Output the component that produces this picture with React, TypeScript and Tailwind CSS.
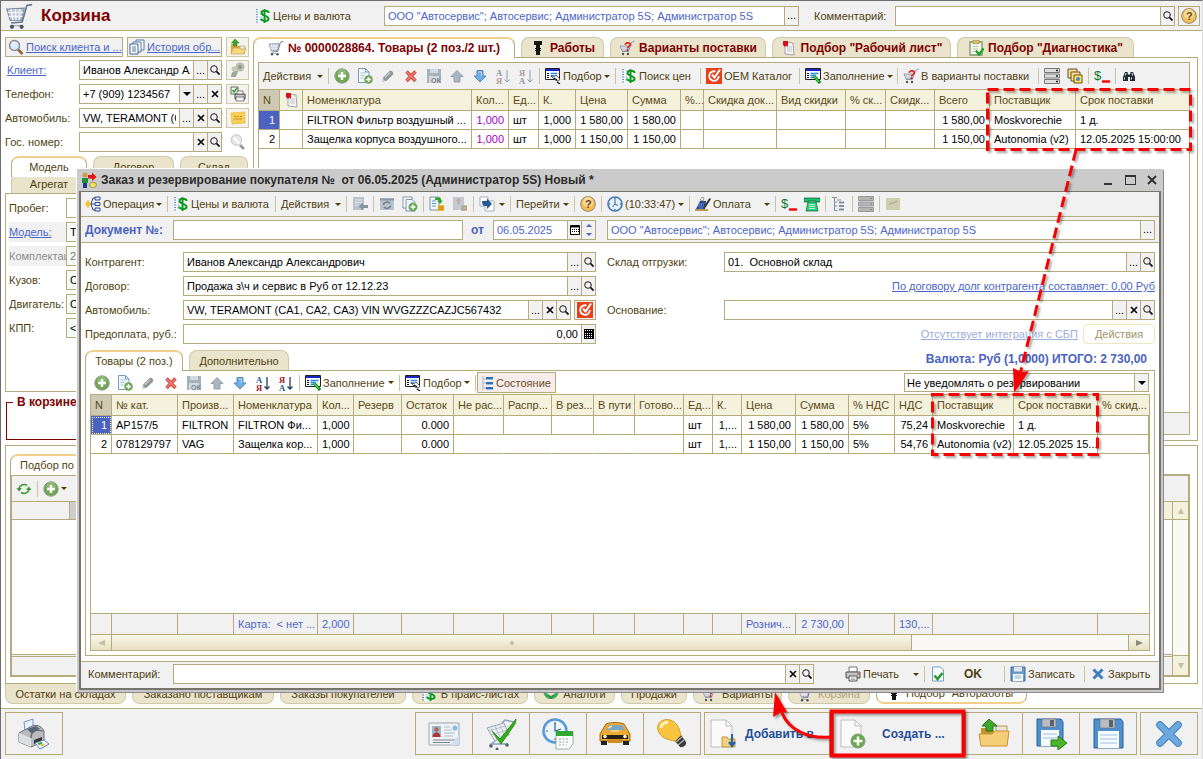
import { useId } from "react";
import type { ReactNode } from "react";

const glyphs: Record<string, ReactNode> = {
  cart: (
    <>
      <path d="M1 4l10-.5-1.500 7H3z" fill="#c3ccd8" stroke="#7d8ba0" strokeWidth=".7" />
      <path d="M3.500 4l1 6.500M6 4l.3 6.500M8.500 4L8 10.500M1.500 6h9M2 8.200h8" stroke="#f4f7fa" strokeWidth=".7" />
      <path d="M15.500 1.500L12.500 2l-2.700 9.500L3.500 12" fill="none" stroke="#66758a" strokeWidth=".9" />
      <path d="M3 13.500h7" stroke="#a9b3c0" strokeWidth=".8" />
      <circle cx="4" cy="14.200" r="1.200" fill="#4a5262" />
      <circle cx="9.500" cy="14.200" r="1.200" fill="#4a5262" />
    </>
  ),
  dollar: (
    <>
      <path d="M3 1h10v14H3z" fill="#f4f8ff" />
      <path d="M2 1v14" stroke="#3b7fc4" strokeDasharray="1 1.500" strokeWidth="1.500" />
      <path d="M4.500 3h3M4.500 6h3M4.500 9h3M4.500 12h3" stroke="#9db7d6" strokeWidth=".8" />
      <path d="M9.500 1v14M13.500 5c0-3-7-3-7 0s7 2.800 7 5.700-7 3-7.500 0" fill="none" stroke="#0d9a1c" strokeWidth="2" />
    </>
  ),
  loupe: (
    <>
      <path d="M9.500 10l5 5" stroke="#9a6240" strokeWidth="2.600" />
      <circle cx="6.500" cy="6.500" r="5" fill="#dcecff" stroke="#8b8f98" strokeWidth="1.500" />
      <path d="M4 5.500c.5-1.500 2-2 3-1.800" fill="none" stroke="#fff" strokeWidth="1.200" />
    </>
  ),
  pages: (
    <>
      <path d="M7 1h8v10H7z" fill="#fff" stroke="#5775a8" />
      <path d="M4 3h8v10H4z" fill="#fff" stroke="#5775a8" />
      <path d="M1 5h8v10H1z" fill="#fff" stroke="#3c5d98" />
      <path d="M3 8h4M3 10h4M3 12h4" stroke="#5775a8" />
    </>
  ),
  folderUp: (
    <>
      <path d="M1 5h5l1 2h8v8H1z" fill="#d9a93c" />
      <path d="M3 9h13l-2 6H1z" fill="#f8d881" stroke="#c9993a" strokeWidth=".6" />
      <path d="M5 0L1.500 4H3.500v3h3.500V4h2z" fill="#3da42c" stroke="#217417" strokeWidth=".5" />
      <path d="M10 7h5v3h-5z" fill="#e9e9e9" stroke="#b79240" strokeWidth=".5" />
    </>
  ),
  person: (
    <>
      <circle cx="10" cy="5" r="4.500" fill="#b9bfb0" />
      <circle cx="10" cy="5" r="2" fill="#8f9a86" />
      <path d="M1 15c0-5 3-7 7-6l-2 6z" fill="#9ea79a" />
      <circle cx="4" cy="7" r="2.500" fill="#c3c7b8" />
    </>
  ),
  printCheck: (
    <>
      <path d="M1 1h7v7H1z" fill="#fff" stroke="#5b6b50" />
      <path d="M2.500 4l1.500 2 3-4" fill="none" stroke="#1f9a23" strokeWidth="1.400" />
      <path d="M5 8h10v5H5z" fill="#c9c9c9" stroke="#444" />
      <path d="M7 5h6v3H7zM6 11h8v4H6z" fill="#f5f5f5" stroke="#555" strokeWidth=".7" />
    </>
  ),
  note: (
    <>
      <path d="M1 3l14-1v11l-13 1z" fill="#f8cf58" stroke="#e2b13b" strokeWidth=".6" />
      <path d="M4 6.500h2M7 6.500h2M10 6.500h2M4 9h8" stroke="#c48d22" strokeWidth="1.200" />
    </>
  ),
  noteGray: (
    <>
      <path d="M1 2h14v12H1z" fill="#cdcdb0" />
      <path d="M4 9c1-3 5-1 8-4" fill="none" stroke="#b39a80" />
    </>
  ),
  bulbGray: (
    <>
      <path d="M11 10l4 4-2 2-4-4z" fill="#999" />
      <circle cx="6.500" cy="6" r="5.300" fill="#e7e7e7" stroke="#c4c4c4" />
      <path d="M4 3.500l5 6" stroke="#fff" strokeWidth="2" />
    </>
  ),
  plus: (
    <>
      <circle cx="8" cy="8" r="7.200" fill="#6ea653" stroke="#8f9b89" />
      <circle cx="8" cy="5.500" r="4.800" fill="#9cc883" opacity=".6" />
      <path d="M8 4v8M4 8h8" stroke="#fff" strokeWidth="2.400" />
    </>
  ),
  addDoc: (
    <>
      <path d="M1.500.5h7l3.500 3.500v10.500H1.500z" fill="#f4f9fe" stroke="#7b9bbd" />
      <path d="M8.500.5V4H12" fill="none" stroke="#7b9bbd" />
      <path d="M3.500 5h5M3.500 7.500h4M3.500 10h3" stroke="#a8c0d8" />
      <circle cx="11.500" cy="11.500" r="4" fill="#66a94c" stroke="#8a9f80" strokeWidth=".6" />
      <path d="M11.500 9v5M9 11.500h5" stroke="#fff" strokeWidth="1.500" />
    </>
  ),
  pencil: (
    <>
      <path d="M2 14l1.500-5L9.500 3c2-1 4.500 1.500 3.500 3.500L7 12.500z" fill="#8f979b" />
      <path d="M5 9.500l5-5" stroke="#c3cacc" strokeWidth="1.500" />
      <path d="M2 14l1-3 2 2z" fill="#dedede" />
    </>
  ),
  cross: (
    <>
      <path d="M3.500 3.500l9 9.500M12.500 3.500l-9 9.500" stroke="#c9473f" strokeWidth="3.400" />
      <path d="M3.800 4l8.500 8.500M12.200 4l-8.500 8.500" stroke="#ef7f73" strokeWidth="1.600" />
    </>
  ),
  saveOk: (
    <>
      <path d="M1 1h14v14H1z" fill="#a7b1bb" />
      <path d="M4 1h8v4H4zM3 8h10v7H3z" fill="#d5dade" />
      <text x="5" y="15" fontSize="7" fontWeight="bold" fill="#76828f">ОК</text>
    </>
  ),
  up: <path d="M8 2.500l6 6h-3V14H5V8.500H2z" fill="#a9b6c1" stroke="#93a1ac" />,
  down: (
    <>
      <path d="M8 14l6-6h-3V2.500H5V8H2z" fill="#6faee6" stroke="#5587b5" />
      <path d="M6.500 4h3v4" fill="none" stroke="#b7dbf8" />
    </>
  ),
  sortOff: (
    <>
      <text x="1" y="7.500" fontSize="8.500" fontFamily="Liberation Serif" fontWeight="bold" fill="#8e979f">А</text>
      <text x="1" y="15.500" fontSize="8.500" fontFamily="Liberation Serif" fontWeight="bold" fill="#a79c9c">Я</text>
      <path d="M12 2v12M9.500 11.500L12 14l2.500-2.500" fill="none" stroke="#8fa0ad" />
    </>
  ),
  sortOffDesc: (
    <>
      <text x="1" y="7.500" fontSize="8.500" fontFamily="Liberation Serif" fontWeight="bold" fill="#a79c9c">Я</text>
      <text x="1" y="15.500" fontSize="8.500" fontFamily="Liberation Serif" fontWeight="bold" fill="#8e979f">А</text>
      <path d="M12 2v12M9.500 11.500L12 14l2.500-2.500" fill="none" stroke="#8fa0ad" />
    </>
  ),
  sortAsc: (
    <>
      <text x="1" y="7.500" fontSize="8.500" fontFamily="Liberation Serif" fontWeight="bold" fill="#1b5a80">А</text>
      <text x="1" y="15.500" fontSize="8.500" fontFamily="Liberation Serif" fontWeight="bold" fill="#a01818">Я</text>
      <path d="M12 2v12M9.500 11.500L12 14l2.500-2.500" fill="none" stroke="#2d3e58" strokeWidth="1.300" />
    </>
  ),
  sortDesc: (
    <>
      <text x="1" y="7.500" fontSize="8.500" fontFamily="Liberation Serif" fontWeight="bold" fill="#a01818">Я</text>
      <text x="1" y="15.500" fontSize="8.500" fontFamily="Liberation Serif" fontWeight="bold" fill="#1b5a80">А</text>
      <path d="M12 2v12M9.500 11.500L12 14l2.500-2.500" fill="none" stroke="#2d3e58" strokeWidth="1.300" />
    </>
  ),
  pick: (
    <>
      <path d="M.5.500h14v11H.5z" fill="#fff" stroke="#222" />
      <path d="M1 2h13" stroke="#1b23c8" strokeWidth="2" />
      <path d="M2 5.500h2M2 7.500h2M2 9.500h2" stroke="#111" strokeWidth="1.200" />
      <path d="M5.500 5.500h7M5.500 8h4" stroke="#2d8be8" strokeWidth="1.500" />
      <path d="M6 8l3 .5 2-1.500 4 4-1.500 2-3-.5z" fill="#f2f2f2" stroke="#333" strokeWidth=".8" />
      <path d="M9 10l3 2M12 14l3 2" stroke="#111" strokeWidth="1.300" />
    </>
  ),
  fill: (
    <>
      <path d="M.5.500h15v11H.5z" fill="#fff" stroke="#222" />
      <path d="M1 2h14" stroke="#1b23c8" strokeWidth="2" />
      <path d="M2 5.500h2M2 7.500h2M2 9.500h2" stroke="#111" strokeWidth="1.200" />
      <path d="M5.500 5.500h8M5.500 7.500h5M5.500 9.500h3" stroke="#2d8be8" strokeWidth="1.300" />
      <path d="M9 8l6 7" stroke="#0c7d18" strokeWidth="3" />
      <path d="M9 8l5 5.800" stroke="#4fe04a" strokeWidth="1.200" />
    </>
  ),
  oem: (
    <>
      <path d="M0 0h16v16H0z" fill="#e8401b" />
      <path d="M9.500 3.500A4.800 4.800 0 1 0 12.800 8" fill="none" stroke="#fff" strokeWidth="1.800" />
      <path d="M14 1.500L8.500 9.500 6 6.500" fill="none" stroke="#fff" strokeWidth="2" />
    </>
  ),
  askCart: (
    <>
      <path d="M1 6h9l-2 5H3z" fill="#cfd6df" stroke="#8a93a3" strokeWidth=".8" />
      <path d="M15.500 1l-3 1.500-3 9H3" fill="none" stroke="#7d9cc0" />
      <circle cx="4" cy="14" r="1.200" fill="#555" />
      <circle cx="9" cy="14" r="1.200" fill="#555" />
      <text x="5" y="11" fontSize="13" fontWeight="bold" fill="#e01818">?</text>
    </>
  ),
  drawers: (
    <>
      <path d="M.5.500h15v4H.5zM.5 6h15v4H.5zM.5 11.500h15v4H.5z" fill="#dedede" stroke="#777" />
      <path d="M12 2.500h2M12 8h2M12 13.500h2" stroke="#222" strokeWidth="1.400" />
    </>
  ),
  drawersGray: (
    <>
      <path d="M.5.500h15v4H.5zM.5 6h15v4H.5zM.5 11.500h15v4H.5z" fill="#b5b5b5" stroke="#9b9b9b" />
      <path d="M12 2.500h2M12 8h2M12 13.500h2" stroke="#888" />
    </>
  ),
  layers: (
    <>
      <path d="M1 1h9v9H1z" fill="#f4dca0" stroke="#6d5314" />
      <path d="M4 4h9v9H4z" fill="#f4dca0" stroke="#6d5314" />
      <path d="M7 7h8v8H7z" fill="#ffe25a" stroke="#6d5314" />
      <circle cx="11" cy="11" r="2" fill="#3f8ac9" />
    </>
  ),
  dollarRed: (
    <>
      <text x="0" y="12" fontSize="13" fill="#0a7a2c">$</text>
      <path d="M8 13.500h8" stroke="#f00" strokeWidth="2.400" />
    </>
  ),
  binoculars: (
    <>
      <path d="M4 4h2.500l.5 3v6H2V9zM9.500 4H12l2 5v4H9V7z" fill="#222b33" />
      <path d="M6 6.500h4v2.500H6z" fill="#222b33" />
      <path d="M3.500 9.500v2M10.500 9.500v2M5 5L4.300 7.500M11 5l.5 2.500" stroke="#dceaf2" />
    </>
  ),
  bolt: <path d="M4 1h8v4h-2v3h1v1h-1v1h1v1h-1v4H6v-4H5v-1h1V9H5V8h1V5H4z" fill="#151515" />,
  redNote: (
    <>
      <path d="M4 2l8 1 1 12-9-1z" fill="#f4f4f4" stroke="#a5a5a5" />
      <path d="M6 7h5M6 9h5M6 11h5" stroke="#bbb" strokeWidth=".8" />
      <path d="M2 1h5v6L5.500 5.500 4 7 2 5z" fill="#d41018" />
    </>
  ),
  clipboard: (
    <>
      <path d="M2 2h12v13H2z" fill="#f7f9f2" stroke="#76956c" strokeWidth="1.300" />
      <path d="M5 .7h6v3H5z" fill="#e1c964" stroke="#93834a" strokeWidth=".7" />
      <path d="M4.500 6.500h6M4.500 9h5M4.500 11.500h3" stroke="#b7c4ad" />
      <path d="M8 10.500l3 4 4.500-6" fill="none" stroke="#1e9f25" strokeWidth="2.200" />
    </>
  ),
  order: (
    <>
      <circle cx="4" cy="3" r="2.500" fill="#d19a4a" />
      <path d="M1 6h6v5H1z" fill="#1f8f3c" />
      <path d="M2 11h4v5H2z" fill="#1b3c92" />
      <path d="M7 3h4V.5L15.500 5 11 9V6.500H7z" fill="#e90f0f" />
      <ellipse cx="12" cy="13" rx="3.500" ry="2.800" fill="#efe06a" stroke="#8e7f1d" strokeWidth=".7" />
    </>
  ),
  operation: (
    <>
      <path d="M3 4v8M0 8h6M1 6l4 4M5 6l-4 4" stroke="#f3c21e" strokeWidth="1.200" />
      <path d="M10 2H8L6 8l2 6h2M6 8h4" fill="none" stroke="#2b4a86" />
      <path d="M10 1h5v3h-5zM10 6.500h5v3h-5zM10 12h5v3h-5z" fill="#e8eefb" stroke="#2b4a86" />
    </>
  ),
  docArrowGray: (
    <>
      <path d="M1 1h11v13H1z" fill="#b9c3cc" />
      <path d="M3 4h7M3 6.500h7M3 9h4" stroke="#e5e9ec" />
      <path d="M16 9h-5V6.500L6.500 10.500l4.500 4V12h5z" fill="#8795a2" />
    </>
  ),
  refreshGray: (
    <>
      <path d="M1 2h14v12H1z" fill="#b9c3cc" />
      <path d="M1 3.500h14" stroke="#8999a6" strokeWidth="2" />
      <path d="M4.500 9a3.500 3 0 0 1 6.500-1.500M11.500 9.500A3.500 3 0 0 1 5 11" fill="none" stroke="#6f8290" strokeWidth="1.500" />
    </>
  ),
  copyAdd: (
    <>
      <path d="M1 1h9v11H1z" fill="#fff" stroke="#7b93b0" />
      <path d="M4 3.500h6l3 3V15H4z" fill="#f1f6fc" stroke="#7b93b0" />
      <circle cx="11" cy="11" r="4.200" fill="#68a94d" stroke="#8a9f80" strokeWidth=".6" />
      <path d="M11 8.500v5M8.500 11h5" stroke="#fff" strokeWidth="1.500" />
    </>
  ),
  docCoins: (
    <>
      <path d="M1 1h9v13H1z" fill="#f3f7fb" stroke="#7b93b0" />
      <path d="M3 5h4M3 7.500h4M3 10h4" stroke="#4e9bd0" />
      <path d="M6 1.500h4c2 0 2 1 2 3h2l-3 3.500L8 4.500h2V4H6z" fill="#2fa32b" />
      <path d="M9 9h6v6H9z" fill="#f2b928" />
      <path d="M9 11h6M9 13h6" stroke="#a97a12" strokeWidth=".8" />
    </>
  ),
  docCoinsGray: (
    <>
      <path d="M1 1h11v13H1z" fill="#c4cad0" />
      <path d="M4 5l2.500-3L9 5H7.500v3h-2V5z" fill="#c7a4a4" />
      <path d="M9 9h6v6H9z" fill="#c2baa0" />
      <path d="M9 11h6M9 13h6" stroke="#a19a80" strokeWidth=".8" />
    </>
  ),
  forward: (
    <>
      <path d="M1 1h8v9H1z" fill="#fff" stroke="#9fb2c8" />
      <path d="M6 5h9v10H6z" fill="#fff" stroke="#9fb2c8" />
      <path d="M3 5h5V2.500L13 8l-5 5v-3H6C4 10 3 8 3 5z" fill="#235a91" />
    </>
  ),
  help: (
    <>
      <circle cx="8" cy="8" r="7.300" fill="#f2bf58" stroke="#a8946b" strokeWidth="1.200" />
      <circle cx="8" cy="6" r="5" fill="#fae7b4" opacity=".7" />
      <text x="5" y="12" fontSize="11" fontWeight="bold" fill="#6f4616">?</text>
    </>
  ),
  clock: (
    <>
      <circle cx="8" cy="8" r="7" fill="#e3f1fc" stroke="#4379b0" strokeWidth="1.600" />
      <path d="M8 3v5l3 1.500M8 8l-2.500 3" fill="none" stroke="#37526f" strokeWidth=".9" />
      <path d="M8 2v1M8 13v1M2 8h1M13 8h1" stroke="#234" />
    </>
  ),
  pay: (
    <>
      <path d="M1 13l4-8h6l-1 8z" fill="#28469b" />
      <path d="M4 8h5M3.500 10h5M4.500 12h4" stroke="#9fb7ea" strokeDasharray="1.200 .8" />
      <path d="M0 13h13v2H0z" fill="#b89b56" />
      <path d="M14.500 2L9 10l-.5 3 2.500-2 5-8z" fill="#3a3a30" />
      <path d="M5 4l2-3 2 1-1 3z" fill="#eee" stroke="#555" strokeWidth=".5" />
    </>
  ),
  phone: (
    <>
      <path d="M0 2h16v4h-4V5H4v1H0z" fill="#16c46a" stroke="#0b5a32" strokeWidth=".7" />
      <path d="M4 6h8l2 9H2z" fill="#23d67a" stroke="#0b5a32" strokeWidth=".7" />
      <path d="M5 8.500h6M5 10.500h6M5 12.500h6" stroke="#fff" strokeDasharray="1.500 .7" strokeWidth="1.200" />
    </>
  ),
  tree: (
    <>
      <path d="M1 1.500h5M6 4h4M3.500 2v12.500h3M3.500 6h3M3.500 10h3" fill="none" stroke="#7f8fa1" />
      <path d="M8 5.500h5v2H8zM8 9h5v2H8zM8 12.500h5v2H8z" fill="#7e90a4" />
    </>
  ),
  state: (
    <>
      <path d="M3 1v14M3 4h4M3 8h4M3 13h4" fill="none" stroke="#a9b8c8" />
      <path d="M6 2h7v3H6zM6 7h7v3H6zM6 12h7v3H6z" fill="#2a6fb3" />
      <path d="M6 4.500h7M6 9.500h7M6 14.500h7" stroke="#7fc3ee" />
    </>
  ),
  printer: (
    <>
      <path d="M4 1h8v5H4z" fill="#fff" stroke="#777" />
      <path d="M1 6h14v6H1z" fill="#c4c4c4" stroke="#555" />
      <path d="M4 10h8v5H4z" fill="#fff" stroke="#555" />
      <path d="M5.500 12h5M5.500 13.500h5" stroke="#888" strokeWidth=".7" />
      <path d="M12 8h2" stroke="#d62f2f" />
    </>
  ),
  docOk: (
    <>
      <path d="M2.500 1h8l3 3v11h-11z" fill="#fafdff" stroke="#6ea0cc" />
      <path d="M4.500 9.500l3 3.500 5-6" fill="none" stroke="#279a28" strokeWidth="2.600" />
    </>
  ),
  diskBlue: (
    <>
      <path d="M1 1h14v14H1z" fill="#6c9bc9" stroke="#3d6a9a" />
      <path d="M4 1h8v4.500H4z" fill="#e2e6ea" />
      <path d="M3 8h10v7H3z" fill="#fff" />
      <path d="M4.500 10h7M4.500 12h7" stroke="#86a9cb" />
    </>
  ),
  crossBlue: <path d="M3.500 3.500l9 9M12.500 3.500l-9 9" stroke="#3f7dbd" strokeWidth="3" />,
  refresh: (
    <>
      <path d="M3 7.500a5 4.500 0 0 1 8-3M13 8.500a5 4.500 0 0 1-8 3" fill="none" stroke="#3a9a2c" strokeWidth="1.600" />
      <path d="M.5 7h5.500L3 10.500zM10 9h5.500L13 5.500z" fill="#3a9a2c" />
    </>
  ),
  analog: (
    <>
      <path d="M3 2a6 6 0 1 0 10 0" fill="none" stroke="#3fae5a" strokeWidth="3.500" />
      <path d="M5 9l3 3 3-3" fill="none" stroke="#2e8a45" strokeWidth="1.500" />
    </>
  ),
  bigCard: (
    <>
      <path d="M1 5h30v22H1z" fill="#f0f3f6" stroke="#9aa5ae" />
      <path d="M4 8h9v11H4z" fill="#9ab7d7" />
      <circle cx="8.500" cy="11.500" r="2.200" fill="#b8643c" />
      <path d="M4.500 19c0-6 8-6 8 0z" fill="#b23230" />
      <path d="M16 9h6M16 12h8M16 15h11M16 18h9" stroke="#b1bcc8" />
      <path d="M5 22h22M5 24.500h17" stroke="#77838f" />
      <circle cx="27" cy="10" r="2.500" fill="#8dbbe5" />
      <path d="M22 27l9-10v10z" fill="#cfe0f2" />
    </>
  ),
  bigCart: (
    <>
      <path d="M2 10l17-5 5 12-14 6z" fill="#e9eef3" stroke="#9aa5b3" />
      <path d="M6 10l6 12M10 8.500l6 12M15 7l5 11M4 13l16-5M6 17l16-5" stroke="#a5afbc" strokeWidth=".7" />
      <path d="M17 5l3-3 9 2M10 23l-4 3h17" fill="none" stroke="#88a3c3" strokeWidth="1.500" />
      <circle cx="6" cy="28" r="1.800" fill="#555f6e" />
      <circle cx="12" cy="31" r="1.500" fill="#555f6e" />
      <circle cx="22" cy="27" r="1.800" fill="#555f6e" />
      <path d="M7 13l8 8L31 1l-1 5-14 20z" fill="#35ae1b" stroke="#2a9414" />
    </>
  ),
  bigClock: (
    <>
      <circle cx="13" cy="13" r="11.500" fill="#eef6fd" stroke="#5a9ad4" strokeWidth="2.600" />
      <path d="M13 5v8l6-2" fill="none" stroke="#3b5e82" strokeWidth="1.200" />
      <path d="M13 4v2M4 13h2M13 20v2" stroke="#3b5e82" />
      <path d="M14 14h17v12l-4 5H14z" fill="#fff" stroke="#8a9a8a" strokeWidth=".8" />
      <path d="M14 13h17v5H14z" fill="#2da832" />
      <path d="M17 21h11M17 24h11M17 27h8" stroke="#8aa0b0" strokeDasharray="2 1.500" strokeWidth="1.200" />
    </>
  ),
  bigCar: (
    <>
      <path d="M1 16l6-10c5-2 13-2 18 0l6 10v7H1z" fill="#eeaa32" stroke="#a06a12" />
      <path d="M7 12l3-5h13l3 5z" fill="#7ba6c4" />
      <path d="M3 17h26v4H3z" fill="#26201a" />
      <circle cx="6" cy="18.500" r="1.800" fill="#fff6d2" />
      <circle cx="26" cy="18.500" r="1.800" fill="#fff6d2" />
      <path d="M9 21h14v4H9z" fill="#d48c1c" />
      <path d="M2 23h6v4H2zM24 23h6v4h-6z" fill="#222" />
      <path d="M12 13h8M9 10l4-2" stroke="#ffe09a" strokeWidth="1.500" />
    </>
  ),
  bigBulb: (
    <>
      <path d="M18 22l7-5 5 7c1 3-3 6-6 5z" fill="#3c3c3c" />
      <path d="M20 24l6-5M22 27l6-5" stroke="#b5b5b5" strokeWidth="1.200" />
      <path d="M2 12C0 5 7 0 14 2c7 2 9 8 11 15l-6 6C13 22 4 20 2 12z" fill="#f9c440" stroke="#d69a24" />
      <path d="M5 10c0-4 4-6 7-6" fill="none" stroke="#fff2bd" strokeWidth="3" />
    </>
  ),
  bigDocFolder: (
    <>
      <path d="M2 2h15l6 6v21H2z" fill="#fafafa" stroke="#bdbdbd" />
      <path d="M17 2v6h6" fill="none" stroke="#bdbdbd" />
      <path d="M13 19h5l1 2h7v8H13z" fill="#f2d07c" stroke="#c49a3c" />
      <path d="M23 16v11M20 24l3 4 3-4" fill="none" stroke="#2562a8" strokeWidth="2.200" />
    </>
  ),
  bigDocPlus: (
    <>
      <path d="M3 2h14l6 6v21H3z" fill="#fafafa" stroke="#bdbdbd" />
      <path d="M17 2v6h6" fill="none" stroke="#bdbdbd" />
      <circle cx="20" cy="23" r="7" fill="#68a94d" stroke="#879a7e" />
      <path d="M20 18.500v9M15.500 23h9" stroke="#fff" strokeWidth="2.500" />
    </>
  ),
  bigFolder: (
    <>
      <path d="M3 10h9l2 3h14v14H3z" fill="#c9932e" />
      <path d="M18 8h11v12H18z" fill="#e8e4da" stroke="#b0935a" />
      <path d="M1 16h13l3-3h14l-2 15H3z" fill="#f7ce78" stroke="#c9932e" />
      <path d="M11 1L4 8h4v5h7V8h4z" fill="#42a82c" stroke="#257419" />
    </>
  ),
  bigDisk: (
    <>
      <path d="M2 1h27l2 3v26H2z" fill="#4f8fcd" stroke="#2c5e94" />
      <path d="M8 1h15v9H8z" fill="#b9bdc2" stroke="#6d7680" strokeWidth=".7" />
      <path d="M17 2h4v7h-4z" fill="#59616b" />
      <path d="M6 13h21v17H6z" fill="#f7fbff" />
      <path d="M8 17h17M8 21h17M8 25h17" stroke="#9dc0e2" />
    </>
  ),
  bigDiskArrow: (
    <>
      <path d="M2 1h24l2 3v24H2z" fill="#4f8fcd" stroke="#2c5e94" />
      <path d="M7 1h14v8H7z" fill="#b9bdc2" stroke="#6d7680" strokeWidth=".7" />
      <path d="M15 2h4v6h-4z" fill="#59616b" />
      <path d="M6 12h18v16H6z" fill="#f7fbff" />
      <path d="M8 16h14M8 20h14" stroke="#9dc0e2" />
      <path d="M16 22h7v-4l9 7-9 7v-4h-7z" fill="#4cb52c" stroke="#2b7a18" />
    </>
  ),
  bigCross: (
    <>
      <path d="M7 7l18 18M25 7L7 25" stroke="#3f7fbf" strokeWidth="7.500" strokeLinecap="round" />
      <path d="M7 7l18 18M25 7L7 25" stroke="#6ea9de" strokeWidth="5.500" strokeLinecap="round" />
    </>
  ),
  bigPrinter: (
    <>
      <path d="M6 4l9-3v10l-8 2z" fill="#e8f3ff" stroke="#7096c4" />
      <path d="M1 15l13-7c6-2 10 1 12 5v10l-13 6-12-5z" fill="#b8bbbf" stroke="#6b6f75" />
      <path d="M1 15l12 5V29L1 24z" fill="#dcdee0" />
      <path d="M13 20c0-6 4-9 12-7" fill="none" stroke="#707070" strokeWidth="1.500" />
      <path d="M9 11l9-3 4 3-9 4z" fill="#5a6672" />
      <path d="M16 22l8-3v4l-8 3z" fill="#333" />
      <path d="M17 25l9-3 5 4-9 5z" fill="#f6f6ff" stroke="#5b86c0" />
      <path d="M20 26l4-1" stroke="#30a83a" strokeWidth="2" />
      <path d="M23 28l3-2" stroke="#e2c22a" strokeWidth="2" />
    </>
  ),
};

function Glyph({ name, box = 16, className = "size-4" }: { name: string; box?: number; className?: string }) {
  return (
    <svg viewBox={`0 0 ${box} ${box}`} className={`${className} shrink-0`} fill="none" aria-hidden="true">
      {glyphs[name]}
    </svg>
  );
}

function Caret() {
  return <span className="ml-auto h-0 w-0 shrink-0 border-x-[3px] border-t-[3px] border-x-transparent border-t-[#4f3a08]" />;
}

const actionMarks: Record<string, ReactNode> = {
  dots: <span className="leading-none">...</span>,
  drop: <span className="border-x-4 border-t-4 border-x-transparent border-t-black" />,
  clear: (
    <svg viewBox="0 0 8 8" className="size-2" stroke="#000" strokeWidth="1.600">
      <path d="M1 1l6 6M7 1L1 7" />
    </svg>
  ),
  find: (
    <svg viewBox="0 0 10 10" className="size-2.5" stroke="#000" fill="none">
      <circle cx="4" cy="4" r="3.300" strokeWidth=".9" />
      <path d="M6.500 6.500l3 3" strokeWidth="1.700" />
    </svg>
  ),
  calendar: (
    <svg viewBox="0 0 10 10" className="size-2.5" stroke="#000" fill="#fff">
      <path d="M.5.500h9v9h-9z" />
      <path d="M.5 1.500h9" strokeWidth="2" />
      <path d="M2 4.500h7M2 6.500h7" strokeDasharray="1 1" />
    </svg>
  ),
  calc: (
    <svg viewBox="0 0 10 10" className="size-2.5" fill="#000">
      <path d="M0 0h10v10H0z" />
      <path d="M1 1.500h8M1 4.500h8M1 6.500h8M1 8.500h8" stroke="#fff" strokeDasharray="1 1" />
    </svg>
  ),
  spin: (
    <span className="flex flex-col gap-1.5">
      <span className="border-x-[3px] border-b-[3px] border-x-transparent border-b-[#4a62c0]" />
      <span className="border-x-[3px] border-t-[3px] border-x-transparent border-t-[#4a62c0]" />
    </span>
  ),
};

const actionNames: Record<string, string> = {
  dots: "Выбрать",
  drop: "Список",
  clear: "Очистить",
  find: "Открыть",
  calendar: "Календарь",
  calc: "Калькулятор",
  spin: "Изменить",
};

type FieldProps = {
  label: ReactNode;
  name?: string;
  value?: string;
  labelClass?: string;
  inputClass?: string;
  className?: string;
  actions?: string[];
  children?: ReactNode;
};

function Field({
  label,
  name,
  value = "",
  labelClass = "",
  inputClass = "text-black",
  className = "flex-1",
  actions = [],
  children,
}: FieldProps) {
  const id = useId();
  return (
    <div className={`flex h-5 min-w-0 items-center ${className}`}>
      {label ? (
        <label htmlFor={id} className={`shrink-0 overflow-hidden whitespace-nowrap ${labelClass}`}>
          {label}
        </label>
      ) : null}
      <div className="flex h-5 min-w-0 flex-1 border border-[#b5ab7c] bg-white">
        <input
          id={id}
          aria-label={name}
          defaultValue={value}
          className={`w-0 min-w-0 flex-1 px-[3px] outline-none ${inputClass}`}
        />
        {actions.map((action) => (
          <button
            key={action}
            type="button"
            aria-label={actionNames[action]}
            className="flex w-3.5 shrink-0 items-center justify-center border-l border-[#b5ab7c] bg-[#f2f1f1] text-black"
          >
            {actionMarks[action]}
          </button>
        ))}
      </div>
      {children}
    </div>
  );
}

function Sep() {
  return <span className="-mx-0.5 h-4 w-px shrink-0 bg-[#c9c3a2]" />;
}

type ToolProps = { icon?: string; text?: string; name?: string; caret?: boolean; className?: string };

function Tool({ icon, text, name, caret, className = "" }: ToolProps) {
  return (
    <button type="button" aria-label={text ? undefined : name} className={`flex shrink-0 items-center gap-0.5 whitespace-nowrap ${className}`}>
      {icon ? <Glyph name={icon} /> : null}
      {text}
      {caret ? <Caret /> : null}
    </button>
  );
}

function EditTools({ sorted }: { sorted?: boolean }) {
  return (
    <>
      <Tool icon="plus" name="Добавить" />
      <Tool icon="addDoc" name="Скопировать" />
      <Tool icon="pencil" name="Изменить" />
      <Tool icon="cross" name="Удалить" />
      <Tool icon="saveOk" name="Завершить" />
      <Tool icon="up" name="Вверх" />
      <Tool icon="down" name="Вниз" />
      <Tool icon={sorted ? "sortAsc" : "sortOff"} name="По возрастанию" />
      <Tool icon={sorted ? "sortDesc" : "sortOffDesc"} name="По убыванию" />
    </>
  );
}

function Tab({ text, icon, active, className = "" }: { text: string; icon?: string; active?: boolean; className?: string }) {
  return (
    <button
      type="button"
      className={`flex h-5 shrink-0 items-center justify-center gap-1 overflow-hidden rounded-t-lg border border-b-0 whitespace-nowrap ${
        active ? "relative -mb-px h-[21px] border-[#b5ab7c] border-t-2 border-t-[#f3cf8c] bg-white pb-0.5" : "border-[#d0c9a5] bg-[#e9e4cb]"
      } ${className}`}
    >
      {icon ? <Glyph name={icon} /> : null}
      {text}
    </button>
  );
}

function BottomTab({ text, icon, active, className = "" }: { text: string; icon?: string; active?: boolean; className?: string }) {
  return (
    <button
      type="button"
      className={`flex h-5 shrink-0 items-center justify-center gap-1 rounded-b-lg border border-t-0 whitespace-nowrap ${
        active ? "border-[#b5ab7c] border-b-2 border-b-[#f3cf8c] bg-white" : "border-[#d0c9a5] bg-[#e9e4cb]"
      } ${className}`}
    >
      {icon ? <Glyph name={icon} /> : null}
      {text}
    </button>
  );
}

const cell = "overflow-hidden whitespace-nowrap border-r border-b border-[#b5ab7c] px-1";

const goodsColumns = [
  { title: "N", width: "w-[21px]" },
  { title: "", width: "w-[23px]" },
  { title: "Номенклатура", width: "w-[169px]" },
  { title: "Кол...", width: "w-[37px]" },
  { title: "Ед...", width: "w-[30px]" },
  { title: "К.", width: "w-[37px]" },
  { title: "Цена", width: "w-[52px]" },
  { title: "Сумма", width: "w-[53px]" },
  { title: "%...", width: "w-[23px]" },
  { title: "Скидка док...", width: "w-[73px]" },
  { title: "Вид скидки", width: "w-[69px]" },
  { title: "% ск...", width: "w-[40px]" },
  { title: "Скидк...", width: "w-[49px]" },
  { title: "Всего", width: "w-[55px]" },
  { title: "Поставщик", width: "w-[86px]" },
  { title: "Срок поставки", width: "" },
];

const goodsRows = [
  ["1", "", "FILTRON Фильтр воздушный ...", "1,000", "шт", "1,000", "1 580,00", "1 580,00", "", "", "", "", "", "1 580,00", "Moskvorechie", "1 д."],
  ["2", "", "Защелка корпуса воздушного...", "1,000", "шт", "1,000", "1 150,00", "1 150,00", "", "", "", "", "", "1 150,00", "Autonomia (v2)", "12.05.2025 15:00:00"],
];

const goodsRight = [0, 3, 5, 6, 7, 13];

function GoodsTable() {
  return (
    <table className="w-full table-fixed border-separate border-spacing-0 border-t border-[#b5ab7c]">
      <thead>
        <tr className="h-[21px] bg-[#f4f1dd] text-left text-[#5a4a14]">
          {goodsColumns.map((column, i) => (
            <th key={i} className={`${cell} font-normal last:border-r-0 ${column.width} ${i === 0 ? "bg-[#cdc9b4]" : ""}`}>
              {i === 1 ? <Glyph name="redNote" /> : column.title}
            </th>
          ))}
        </tr>
      </thead>
      <tbody>
        {goodsRows.map((row) => (
          <tr key={row[0]} className="h-[19px] bg-white text-black">
            {row.map((text, i) => (
              <td
                key={i}
                className={`${cell} last:border-r-0 ${goodsRight.includes(i) ? "text-right" : ""} ${i === 3 ? "text-[#a800c8]" : ""} ${
                  i === 0 && text === "1" ? "bg-[#4a62c0] text-white" : ""
                }`}
              >
                {text}
              </td>
            ))}
          </tr>
        ))}
      </tbody>
    </table>
  );
}

const orderColumns = [
  { title: "N", width: "w-[21px]" },
  { title: "№ кат.", width: "w-[66px]" },
  { title: "Произв...", width: "w-[56px]" },
  { title: "Номенклатура", width: "w-[84px]" },
  { title: "Кол...", width: "w-[36px]" },
  { title: "Резерв", width: "w-[48px]" },
  { title: "Остаток", width: "w-[52px]" },
  { title: "Не рас...", width: "w-[50px]" },
  { title: "Распр...", width: "w-[48px]" },
  { title: "В рез...", width: "w-[42px]" },
  { title: "В пути", width: "w-[41px]" },
  { title: "Готово...", width: "w-[49px]" },
  { title: "Ед...", width: "w-[29px]" },
  { title: "К.", width: "w-[29px]" },
  { title: "Цена", width: "w-[54px]" },
  { title: "Сумма", width: "w-[53px]" },
  { title: "% НДС", width: "w-[46px]" },
  { title: "НДС", width: "w-[38px]" },
  { title: "Поставщик", width: "w-[81px]" },
  { title: "Срок поставки", width: "w-[84px]" },
  { title: "% скид...", width: "" },
];

const orderRows = [
  ["1", "AP157/5", "FILTRON", "FILTRON Фи...", "1,000", "", "0.000", "", "", "", "", "", "шт", "1,...", "1 580,00", "1 580,00", "5%", "75,24", "Moskvorechie", "1 д.", ""],
  ["2", "078129797", "VAG", "Защелка кор...", "1,000", "", "0.000", "", "", "", "", "", "шт", "1,...", "1 150,00", "1 150,00", "5%", "54,76", "Autonomia (v2)", "12.05.2025 15...", ""],
];

const orderTotals = ["", "", "", "Карта:  < нет ...", "2,000", "", "", "", "", "", "", "", "", "", "Рознич...", "2 730,00", "", "130,...", "", "", ""];
const orderRight = [0, 4, 6, 13, 14, 15, 17];

function OrderTable() {
  return (
    <table className="w-full table-fixed border-separate border-spacing-0">
      <thead>
        <tr className="h-[21px] bg-[#f4f1dd] text-left text-[#5a4a14]">
          {orderColumns.map((column, i) => (
            <th key={i} className={`${cell} font-normal last:border-r-0 ${column.width} ${i === 0 ? "bg-[#cdc9b4]" : ""}`}>
              {column.title}
            </th>
          ))}
        </tr>
      </thead>
      <tbody>
        {orderRows.map((row, r) => (
          <tr key={row[0]} className="h-[19px] text-black">
            {row.map((text, i) => (
              <td
                key={i}
                className={`${cell} ${orderRight.includes(i) ? "text-right" : ""} ${
                  r === 1 && i > 6 && i < 11 ? "border-r-transparent" : ""
                } ${i === 0 && r === 0 ? "bg-[#4a62c0] text-white outline-1 -outline-offset-2 outline-dotted outline-white" : ""}`}
              >
                {text}
              </td>
            ))}
          </tr>
        ))}
      </tbody>
    </table>
  );
}

function OrderTotals() {
  return (
    <table className="w-full table-fixed border-separate border-spacing-0 border-t border-[#b5ab7c]">
      <tbody>
        <tr className="h-[21px] bg-[#f2f1f1] text-[#4a66c8]">
          {orderTotals.map((text, i) => (
            <td key={i} className={`${cell} whitespace-pre last:border-r-0 ${orderColumns[i].width} ${i !== 14 && orderRight.includes(i) ? "text-right" : ""}`}>
              {text}
            </td>
          ))}
        </tr>
      </tbody>
    </table>
  );
}

function Header() {
  return (
    <header className="flex h-[30px] items-center border-b border-[#b5ab7c] bg-[#f2f1f1] pr-0.5 pl-1">
      <Glyph name="cart" className="size-7" />
      <h1 className="ml-2 w-[214px] text-[17px] font-bold text-[#800000]">Корзина</h1>
      <Tool icon="dollar" text="Цены и валюта" className="w-[129px]" />
      <Field
        label=""
        name="Организация"
        value={'ООО "Автосервис"; Автосервис; Администратор 5S; Администратор 5S'}
        inputClass="text-[#4a66c8]"
        className="w-[415px] shrink-0"
        actions={["dots"]}
      />
      <Field label="Комментарий:" labelClass="w-[81px]" className="ml-[15px] flex-1" actions={["find"]} />
      <button type="button" aria-label="Справка" className="ml-[3px] flex h-5 w-[22px] items-center justify-center border border-[#b5ab7c]">
        <Glyph name="help" />
      </button>
    </header>
  );
}

function SideButton({ icon, name, plain }: { icon: string; name: string; plain?: boolean }) {
  return (
    <button
      type="button"
      aria-label={name}
      className={`ml-1 flex h-5 w-[23px] shrink-0 items-center justify-center border ${plain ? "border-transparent" : "border-[#cfc8a4] bg-[#f4f3ee]"}`}
    >
      <Glyph name={icon} />
    </button>
  );
}

function ClientPanel() {
  return (
    <section className="flex w-[244px] shrink-0 flex-col">
      <div className="flex h-5">
        <a href="#client" className="flex w-[118px] items-center gap-0.5 border border-[#b5ab7c] bg-[#f2f1f1] px-0.5 whitespace-nowrap text-[#4a66c8] underline">
          <Glyph name="loupe" />
          Поиск клиента и ...
        </a>
        <a href="#history" className="ml-1 flex w-[95px] items-center gap-0.5 border border-[#b5ab7c] bg-[#f2f1f1] px-px whitespace-nowrap text-[#4a66c8] underline">
          <Glyph name="pages" />
          История обр...
        </a>
        <SideButton icon="folderUp" name="Загрузить" />
      </div>
      <div className="mt-[3px] flex flex-col gap-1">
        <Field
          label={<a href="#card" className="text-[#4a66c8] underline">Клиент:</a>}
          name="Клиент"
          value="Иванов Александр Алексеевич"
          labelClass="w-[74px] pl-0.5"
          className=""
          actions={["dots", "find"]}
        >
          <SideButton icon="person" name="Карточка" />
        </Field>
        <Field label="Телефон:" value="+7 (909) 1234567" labelClass="w-[74px]" className="" actions={["drop", "dots", "clear"]}>
          <SideButton icon="printCheck" name="Печать" />
        </Field>
        <Field label="Автомобиль:" value="VW, TERAMONT (CA1, CA2)" labelClass="w-[74px]" className="" actions={["dots", "clear", "find"]}>
          <SideButton icon="note" name="Заметка" />
        </Field>
        <Field label="Гос. номер:" labelClass="w-[74px]" className="" actions={["clear", "find"]}>
          <SideButton icon="bulbGray" name="Подсказка" plain />
        </Field>
      </div>
      <div className="mt-1 flex gap-1.5 pl-1.5">
        <Tab text="Модель" className="w-[76px]" active />
        <Tab text="Договор" className="w-[81px]" />
        <Tab text="Склад" className="w-[68px]" />
      </div>
      <div className="-mt-[3px] flex pl-1.5">
        <Tab text="Агрегат" className="w-[76px]" />
      </div>
      <div className="flex h-[199px] flex-col gap-1 border border-[#b5ab7c] pt-1 pl-[3px]">
        <Field label="Пробег:" labelClass="w-[57px]" className="" />
        <Field
          label={<a href="#model" className="text-[#4a66c8] underline">Модель:</a>}
          name="Модель"
          value="TERAMONT"
          labelClass="w-[57px]"
          inputClass="bg-[#f2fcf4] text-black"
          className="bg-[#f2f1f1]"
        />
        <Field label="Комплектация:" value="2" labelClass="w-[57px] text-[#8d8d8d]" inputClass="bg-[#f2fcf4] text-[#777]" className="bg-[#f2f1f1]" />
        <Field label="Кузов:" value="CA1" labelClass="w-[57px]" inputClass="bg-[#f2fcf4] text-black" className="" />
        <Field label="Двигатель:" value="CHHB" labelClass="w-[57px]" inputClass="bg-[#f2fcf4] text-black" className="" />
        <Field label="КПП:" value="< нет >" labelClass="w-[57px]" inputClass="bg-[#f2fcf4] text-black" className="" />
      </div>
      <fieldset className="mx-px mt-1 h-11 border border-[#800000] pl-1.5">
        <legend className="px-1 text-xs leading-3 font-bold text-[#800000]">В корзине</legend>
      </fieldset>
    </section>
  );
}

function GoodsPanel() {
  return (
    <section className="flex min-w-0 flex-1 flex-col">
      <nav className="flex gap-1.5 text-xs font-bold text-[#800000]">
        <Tab icon="cart" text="№ 0000028864. Товары (2 поз./2 шт.)" className="w-[262px]" active />
        <Tab icon="bolt" text="Работы" className="w-[83px]" />
        <Tab icon="askCart" text="Варианты поставки" className="w-[156px]" />
        <Tab icon="redNote" text={'Подбор "Рабочий лист"'} className="w-[179px]" />
        <Tab icon="clipboard" text={'Подбор "Диагностика"'} className="w-[177px]" />
      </nav>
      <div className="flex flex-1 flex-col border border-[#b5ab7c] px-1 pt-1 pb-[5px] pr-[7px]">
        <div className="flex flex-1 flex-col border border-[#b5ab7c]">
          <div className="flex h-[26px] items-center gap-[7px] overflow-hidden bg-[#f2f1f1] pl-1">
            <Tool text="Действия" caret className="w-[60px]" />
            <Sep />
            <EditTools />
            <Sep />
            <Tool icon="pick" text="Подбор" caret className="w-[65px]" />
            <Sep />
            <Tool icon="dollar" text="Поиск цен" className="w-[74px]" />
            <Sep />
            <Tool icon="oem" text="OEM Каталог" className="w-[88px]" />
            <Sep />
            <Tool icon="fill" text="Заполнение" caret className="w-[87px]" />
            <Sep />
            <Tool icon="askCart" text="В варианты поставки" className="w-[130px]" />
            <Sep />
            <Tool icon="drawers" name="Склад" />
            <Tool icon="layers" name="Изображения" />
            <Sep />
            <Tool icon="dollarRed" name="Долг" />
            <Sep />
            <Tool icon="binoculars" name="Поиск" />
          </div>
          <GoodsTable />
          <div className="flex-1" />
          <div className="h-[22px] border-t border-[#b5ab7c] bg-[#f2f1f1]" />
        </div>
      </div>
    </section>
  );
}

function SelectionPanel() {
  return (
    <section className="mx-1 flex h-[239px] shrink-0 flex-col border border-[#b5ab7c] pt-2 pr-[7px] pb-1.5 pl-1">
      <div className="flex">
        <Tab text="Подбор по" className="w-[74px]" active />
      </div>
      <div className="flex flex-1 flex-col border-2 border-[#b5ab7c]">
        <div className="flex h-[25px] items-center gap-[7px] bg-[#f2f1f1] pl-1">
          <Tool icon="refresh" name="Обновить" />
          <Sep />
          <Tool icon="plus" name="Добавить" caret />
        </div>
        <div className="flex h-[19px] border-y border-[#b5ab7c] bg-[#f2f1f1]">
          <div className="w-[58px] border-r border-[#b5ab7c]" />
          <div className="w-20 border-r border-[#b5ab7c] bg-[#cdcdcd]" />
          <div className="flex-1 bg-[#f4f1dd]" />
          <div className="flex w-4 items-center justify-center border-l border-[#b5ab7c] bg-[#f4f1dd]">
            <span className="border-x-[3px] border-b-[6px] border-x-transparent border-b-[#c4bfa4]" />
          </div>
        </div>
        <div className="flex flex-1">
          <div className="flex flex-1 flex-col">
            <div className="flex-1" />
            <div className="h-[21px] border-t-[3px] border-double border-[#b5ab7c] bg-[#f2f1f1]" />
          </div>
          <div className="flex w-4 flex-col justify-end border-l border-[#b5ab7c] bg-[#faf9f5]">
            <div className="flex h-5 items-center justify-center border-t border-[#b5ab7c] bg-[#f4f1dd]">
              <span className="border-x-[3px] border-t-[6px] border-x-transparent border-t-[#c4bfa4]" />
            </div>
          </div>
        </div>
      </div>
    </section>
  );
}

function IconAction({ icon, name }: { icon: string; name: string }) {
  return (
    <button type="button" aria-label={name} className="-ml-px flex h-[43px] w-[58px] shrink-0 items-center justify-center border border-[#b5ab7c]">
      <Glyph name={icon} box={32} className="size-8" />
    </button>
  );
}

function Footer() {
  return (
    <footer className="flex h-[51px] shrink-0 border-t border-[#b5ab7c] bg-[#f2f1f1] pt-[3px] pr-1 pl-[5px]">
      <IconAction icon="bigPrinter" name="Печать" />
      <div className="flex-1" />
      <IconAction icon="bigCard" name="Карточка" />
      <IconAction icon="bigCart" name="Продажа" />
      <IconAction icon="bigClock" name="Запись" />
      <IconAction icon="bigCar" name="Автомобиль" />
      <IconAction icon="bigBulb" name="Подсказка" />
      <button type="button" className="ml-[3px] flex h-[43px] w-[126px] shrink-0 items-center gap-1 border border-[#b5ab7c] pl-1 text-xs font-bold whitespace-nowrap text-[#1f4e98]">
        <Glyph name="bigDocFolder" box={32} className="size-8" />
        Добавить в
      </button>
      <button type="button" className="ml-[3px] flex h-[43px] w-[133px] shrink-0 items-center gap-3 border border-[#b5ab7c] pl-1 text-xs font-bold whitespace-nowrap text-[#1f4e98]">
        <Glyph name="bigDocPlus" box={32} className="size-8" />
        Создать ...
      </button>
      <IconAction icon="bigFolder" name="Открыть" />
      <IconAction icon="bigDiskArrow" name="Записать и перейти" />
      <IconAction icon="bigDisk" name="Записать" />
      <span className="w-1" />
      <IconAction icon="bigCross" name="Закрыть" />
    </footer>
  );
}

function OrderWindow() {
  return (
    <section
      role="dialog"
      aria-label="Заказ и резервирование покупателя"
      className="absolute top-[168px] right-[39px] bottom-[67px] left-[76px] flex flex-col border-2 border-[#c9c7c9] bg-white shadow-[-1px_-1px_0_#ffffff,1px_1px_0_#8c8a8c]"
    >
      <div className="-mx-0.5 -mt-0.5 flex h-[22px] shrink-0 items-center bg-[#cbcbcb] pr-1 pl-1">
        <Glyph name="order" />
        <h2 className="ml-1 flex-1 text-xs font-bold whitespace-pre text-[#2b2b2b]">
          Заказ и резервирование покупателя №  от 06.05.2025 (Администратор 5S) Новый *
        </h2>
        <div className="flex gap-2">
          <button type="button" aria-label="Свернуть" className="flex size-3.5 items-end justify-center pb-0.5">
            <span className="h-0.5 w-2 bg-[#333]" />
          </button>
          <button type="button" aria-label="Развернуть" className="flex size-3.5 items-center justify-center">
            <span className="h-2.5 w-[11px] border border-t-2 border-[#333]" />
          </button>
          <button type="button" aria-label="Закрыть окно" className="flex size-3.5 items-center justify-center">
            <svg viewBox="0 0 10 10" className="size-2.5" stroke="#333" strokeWidth="2"><path d="M1 1l8 8M9 1L1 9" /></svg>
          </button>
        </div>
      </div>
      <div className="flex min-h-0 flex-1 flex-col border-2 border-t border-[#77756b]">
        <div className="flex h-[25px] shrink-0 items-center gap-[7px] overflow-hidden border-b border-[#b5ab7c] bg-[#f2f1f1] pl-1">
          <Tool icon="operation" text="Операция" caret className="w-[77px]" />
          <Sep />
          <Tool icon="dollar" text="Цены и валюта" className="w-[97px]" />
          <Sep />
          <Tool text="Действия" caret className="w-[60px]" />
          <Sep />
          <Tool icon="docArrowGray" name="Провести" />
          <Sep />
          <Tool icon="refreshGray" name="Обновить" />
          <Tool icon="copyAdd" name="Скопировать" />
          <Sep />
          <Tool icon="docCoins" name="Провести документ" />
          <Tool icon="docCoinsGray" name="Отменить проведение" />
          <Sep />
          <Tool icon="forward" name="Ввести на основании" caret className="w-[26px]" />
          <Sep />
          <Tool text="Перейти" caret className="w-[53px]" />
          <Sep />
          <Tool icon="help" name="Справка" />
          <Sep />
          <Tool icon="clock" text="(10:33:47)" caret className="w-[77px]" />
          <Sep />
          <Tool icon="pay" text="Оплата" caret className="w-[75px]" />
          <Sep />
          <Tool icon="dollarRed" name="Долг" />
          <Tool icon="phone" name="Позвонить" />
          <Sep />
          <Tool icon="tree" name="Структура" />
          <Sep />
          <Tool icon="drawersGray" name="Склад" />
          <Sep />
          <Tool icon="noteGray" name="Заметка" />
        </div>
        <div className="flex h-[26px] shrink-0 items-center border-b border-[#b5ab7c] bg-[#f2f1f1] px-1">
          <Field label="Документ №:" labelClass="w-[88px] text-xs font-bold text-[#4a62c0]" className="w-[378px] shrink-0" />
          <Field
            label="от"
            value="06.05.2025"
            labelClass="w-[22px] text-xs font-bold text-[#4a62c0]"
            inputClass="text-[#4a66c8]"
            className="ml-2 w-[125px] shrink-0"
            actions={["calendar", "spin"]}
          />
          <Field
            label=""
            name="Организация документа"
            value={'ООО "Автосервис"; Автосервис; Администратор 5S; Администратор 5S'}
            inputClass="text-[#4a66c8]"
            className="ml-[11px] flex-1"
            actions={["dots"]}
          />
        </div>
        <div className="flex shrink-0 gap-[11px] px-1 pt-[9px]">
          <div className="flex w-[511px] shrink-0 flex-col gap-1">
            <Field label="Контрагент:" value="Иванов Александр Александрович" labelClass="w-[98px]" className="" actions={["dots", "find"]} />
            <Field label="Договор:" value="Продажа з\ч и сервис в Руб от 12.12.23" labelClass="w-[98px]" className="" actions={["dots", "find"]} />
            <Field label="Автомобиль:" value="VW, TERAMONT (CA1, CA2, CA3) VIN WVGZZZCAZJC567432" labelClass="w-[98px]" className="" actions={["dots", "clear", "find"]}>
              <button type="button" aria-label="OEM Каталог" className="ml-[3px] flex h-5 w-[22px] items-center justify-center border border-[#b5ab7c] bg-[#f2f1f1]">
                <Glyph name="oem" />
              </button>
            </Field>
            <Field label="Предоплата, руб.:" value="0,00" labelClass="w-[98px]" inputClass="text-right text-black" className="" actions={["calc"]} />
          </div>
          <div className="flex min-w-0 flex-1 flex-col gap-1">
            <Field label="Склад отгрузки:" value="01.  Основной склад" labelClass="w-[117px]" className="" actions={["dots", "find"]} />
            <div className="flex h-5 items-center justify-end">
              <a href="#debt" className="text-[#4a66c8] underline">По договору долг контрагента составляет: 0,00 Руб</a>
            </div>
            <Field label="Основание:" labelClass="w-[117px]" className="" actions={["dots", "clear", "find"]} />
            <div className="flex h-5 items-center justify-end gap-[5px]">
              <a href="#sbp" className="text-[#9aaedd] underline">Отсутствует интеграция с СБП</a>
              <button type="button" className="h-5 w-[72px] rounded-sm border border-[#efe6c0] text-[#a3946a]">Действия</button>
            </div>
          </div>
        </div>
        <div className="mt-1.5 flex shrink-0 items-start gap-1.5 px-1">
          <Tab text="Товары (2 поз.)" className="w-[98px]" active />
          <Tab text="Дополнительно" className="w-[100px]" />
          <p className="flex-1 pt-px pr-2 text-right text-xs font-bold text-[#4a62c0]">Валюта: Руб (1,0000) ИТОГО: 2 730,00</p>
        </div>
        <div className="mx-1 flex min-h-0 flex-1 flex-col border border-[#b5ab7c] px-1 pb-1">
          <div className="flex h-[23px] shrink-0 items-center gap-[7px] pl-1">
            <EditTools sorted />
            <Sep />
            <Tool icon="fill" text="Заполнение" caret className="w-[89px]" />
            <Sep />
            <Tool icon="pick" text="Подбор" caret className="w-[65px]" />
            <Sep />
            <button type="button" className="-ml-1 flex h-[21px] w-[79px] items-center border border-[#b5ab7c] bg-[#f7ecea] pl-0.5 text-[#6b4a28]">
              <Glyph name="state" />
              Состояние
            </button>
            <div className="ml-auto pr-px">
              <div className="relative h-[19px] w-[245px] border border-[#b5ab7c] bg-white text-black">
                <select aria-label="Уведомление о резервировании" className="h-full w-full appearance-none bg-transparent pl-0.5 outline-none">
                  <option>Не уведомлять о резервировании</option>
                </select>
                <span className="pointer-events-none absolute inset-y-0 right-0 flex w-3.5 items-center justify-center border-l border-[#b5ab7c] bg-[#f2f1f1]">
                  {actionMarks.drop}
                </span>
              </div>
            </div>
          </div>
          <div className="flex min-h-0 flex-1 flex-col border border-[#b5ab7c]">
            <OrderTable />
            <div className="flex-1" />
            <OrderTotals />
            <div className="flex h-[15px] shrink-0 bg-[#faf9f5]">
              <button type="button" aria-label="Влево" className="flex w-[21px] items-center justify-center border-r border-[#b5ab7c] bg-linear-to-b from-[#faf8ec] to-[#e6e0c2]">
                <span className="border-y-[3px] border-r-[7px] border-y-transparent border-r-[#c4bfa4]" />
              </button>
              <div className="flex w-[800px] items-center justify-center border-r border-[#b5ab7c] bg-linear-to-b from-[#faf8ec] to-[#e6e0c2]">
                <span className="size-1 rounded-full bg-[#c4bfa4]" />
              </div>
              <div className="flex-1" />
              <button type="button" aria-label="Вправо" className="flex w-[21px] items-center justify-center border-l border-[#b5ab7c] bg-linear-to-b from-[#faf8ec] to-[#e6e0c2]">
                <span className="border-y-[3px] border-l-[7px] border-y-transparent border-l-[#8d8a78]" />
              </button>
            </div>
          </div>
        </div>
        <div className="mt-[5px] flex h-[27px] shrink-0 items-center gap-[7px] border-t border-[#b5ab7c] bg-[#f2f1f1] pr-2 pb-0.5 pl-[7px]">
          <Field label="Комментарий:" labelClass="w-[85px]" className="flex-1" actions={["clear", "find"]} />
          <Tool icon="printer" text="Печать" className="ml-6 w-[61px]" />
          <Caret />
          <Sep />
          <button type="button" className="flex w-[69px] items-center gap-[18px] text-xs font-bold">
            <Glyph name="docOk" />
            OK
          </button>
          <Sep />
          <Tool icon="diskBlue" text="Записать" className="w-[69px]" />
          <Sep />
          <Tool icon="crossBlue" text="Закрыть" className="w-[61px]" />
        </div>
      </div>
    </section>
  );
}

function Callouts() {
  return (
    <svg
      viewBox="0 0 1203 759"
      className="pointer-events-none absolute -top-px -left-px h-[759px] w-[1203px] drop-shadow-[2px_2px_1px_rgba(0,0,0,0.35)]"
      fill="none"
      stroke="#fb0000"
      aria-hidden="true"
    >
      <path d="M987.500 89.500h203v60h-203z" strokeWidth="3" strokeDasharray="11 5" />
      <path d="M932.500 394.500h165v60h-165z" strokeWidth="3" strokeDasharray="11 5" />
      <path d="M1076 150L1020 374" strokeWidth="3" strokeDasharray="11 5" />
      <path d="M1014 393l-1-25 8 4 8-1z" fill="#fb0000" stroke="none" />
      <path d="M831.500 711.500h132v44h-132z" strokeWidth="4" />
      <path d="M830 737c-22 2-41-7-48-24" strokeWidth="3" />
      <path d="M775 692l-2 25 7-4 7-1z" fill="#fb0000" stroke="none" />
    </svg>
  );
}

export default function App() {
  return (
    <main className="relative flex min-h-screen w-full flex-col overflow-hidden border-t border-r border-l border-t-[#6f6d6f] border-r-[#dcdcdc] border-l-[#6f6d6f] bg-white font-['Liberation_Sans',sans-serif] text-[11px] leading-[14px] text-[#4f3f10]">
      <Header />
      <div className="flex flex-1 gap-1 px-1 pt-1.5 pb-1">
        <ClientPanel />
        <GoodsPanel />
      </div>
      <SelectionPanel />
      <nav className="mb-1 flex gap-1.5 px-1">
        <BottomTab text="Остатки на складах" className="w-[121px]" />
        <BottomTab text="Заказано поставщикам" className="w-[142px]" />
        <BottomTab text="Заказы покупателей" className="w-[126px]" />
        <BottomTab icon="dollar" text="В прайс-листах" className="w-[116px]" />
        <BottomTab icon="analog" text="Аналоги" className="w-[81px]" />
        <BottomTab text="Продажи" className="w-[66px]" />
        <BottomTab icon="askCart" text="Варианты" className="w-[89px]" />
        <BottomTab icon="cart" text="Корзина" className="w-[82px] text-[#b3a67c]" />
        <BottomTab icon="bolt" text={'Подбор "Автоработы"'} className="w-[151px]" active />
      </nav>
      <Footer />
      <OrderWindow />
      <Callouts />
    </main>
  );
}
